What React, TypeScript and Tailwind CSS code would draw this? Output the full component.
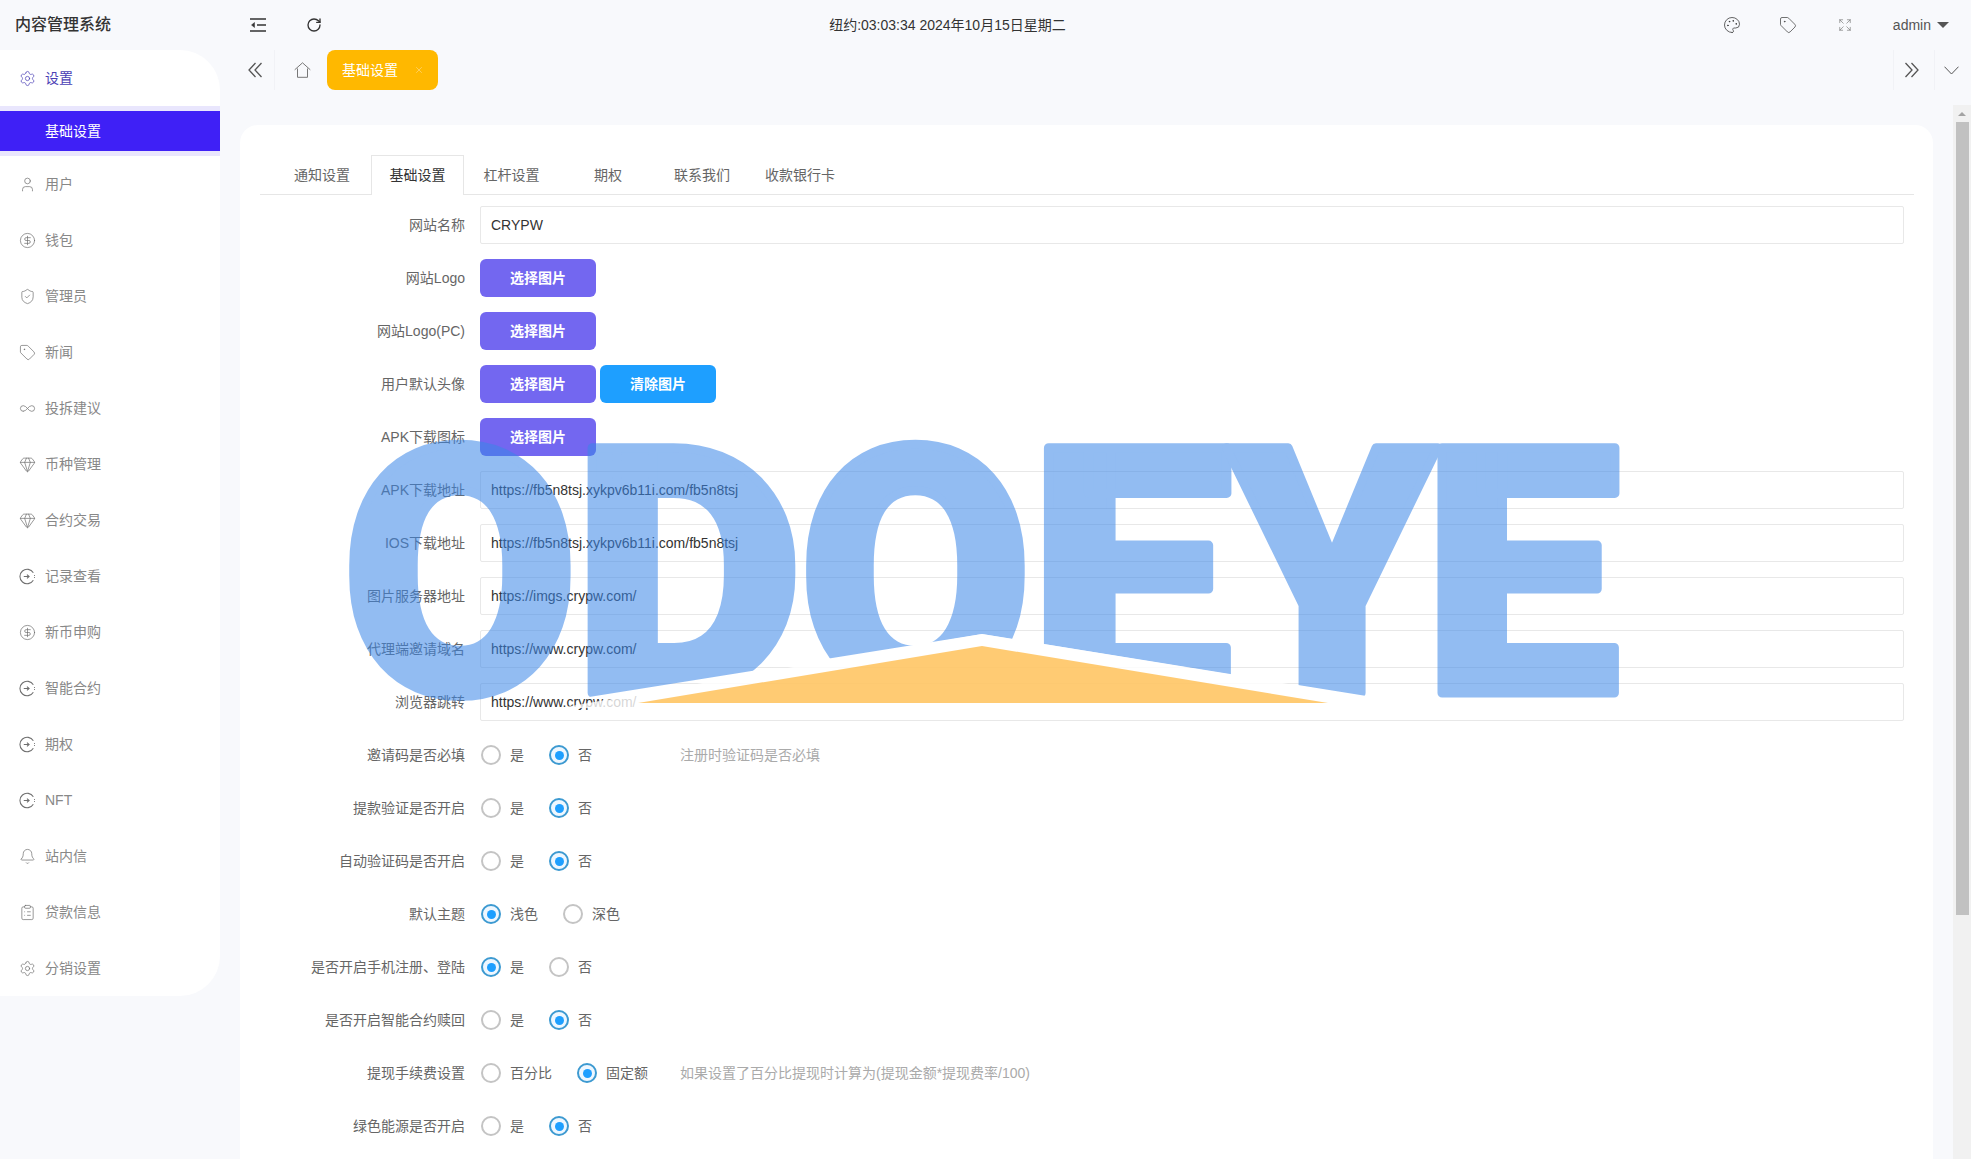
import React from "react";
import {
  Settings,
  User,
  CircleDollarSign,
  ShieldCheck,
  Tag,
  Infinity as InfinityIcon,
  Gem,
  Bell,
  ClipboardList,
  RotateCw,
  Palette,
  Expand,
  X,
} from "lucide-react";

const CircleIn = ({ size = 17 }: { size?: number }) => (
  <svg width={size} height={size} viewBox="0 0 16 16" fill="none" stroke="currentColor" strokeWidth="1">
    <path d="M13.5 4.5A6.8 6.8 0 1 0 13.5 11.5" />
    <path d="M4.5 8h5M7.5 6.3 9.5 8l-2 1.7" />
    <path d="M14.2 7h.8M14.2 9h.8" />
  </svg>
);

const Outdent = () => (
  <svg width="16" height="14" viewBox="0 0 16 14" fill="none" stroke="#333333" strokeWidth="1.5">
    <path d="M0 1h16M7 7h9M0 13h16" />
    <path d="M4.5 4.5 1.5 7l3 2.5z" fill="#333333" strokeWidth="0.5" />
  </svg>
);

const DoubleChevron = ({ dir }: { dir: "left" | "right" }) => (
  <svg width="14" height="16" viewBox="0 0 14 16" fill="none" stroke="#555555" strokeWidth="1.3">
    {dir === "left" ? <path d="M7.5 1 1 8l6.5 7M13.5 1 7 8l6.5 7" /> : <path d="M.5 1 7 8l-6.5 7M6.5 1 13 8l-6.5 7" />}
  </svg>
);

const HomeIcon = () => (
  <svg width="17" height="16" viewBox="0 0 17 16" fill="none" stroke="#777777" strokeWidth="1">
    <path d="M.7 7.8 8.5.8l7.8 7M3.5 6.5v8.8h10V6.5" />
  </svg>
);

const DownIcon = () => (
  <svg width="15" height="9" viewBox="0 0 15 9" fill="none" stroke="#555555" strokeWidth="1">
    <path d="M.5.7 7.5 8l7-7.3" />
  </svg>
);

const menu = [
  { name: "用户", icon: <User size={17} strokeWidth={1} /> },
  { name: "钱包", icon: <CircleDollarSign size={17} strokeWidth={1} /> },
  { name: "管理员", icon: <ShieldCheck size={17} strokeWidth={1} /> },
  { name: "新闻", icon: <Tag size={17} strokeWidth={1} /> },
  { name: "投拆建议", icon: <InfinityIcon size={17} strokeWidth={1} /> },
  { name: "币种管理", icon: <Gem size={17} strokeWidth={1} /> },
  { name: "合约交易", icon: <Gem size={17} strokeWidth={1} /> },
  { name: "记录查看", icon: <CircleIn /> },
  { name: "新币申购", icon: <CircleDollarSign size={17} strokeWidth={1} /> },
  { name: "智能合约", icon: <CircleIn /> },
  { name: "期权", icon: <CircleIn /> },
  { name: "NFT", icon: <CircleIn /> },
  { name: "站内信", icon: <Bell size={17} strokeWidth={1} /> },
  { name: "贷款信息", icon: <ClipboardList size={17} strokeWidth={1} /> },
  { name: "分销设置", icon: <Settings size={17} strokeWidth={1} /> },
];

const inputs1 = [{ label: "网站名称", value: "CRYPW" }];
const inputs2 = [
  { label: "APK下载地址", value: "https://fb5n8tsj.xykpv6b11i.com/fb5n8tsj" },
  { label: "IOS下载地址", value: "https://fb5n8tsj.xykpv6b11i.com/fb5n8tsj" },
  { label: "图片服务器地址", value: "https://imgs.crypw.com/" },
  { label: "代理端邀请域名", value: "https://www.crypw.com/" },
  { label: "浏览器跳转", value: "https://www.crypw.com/" },
];

const radios = [
  { label: "邀请码是否必填", options: ["是", "否"], checked: 1, hint: "注册时验证码是否必填" },
  { label: "提款验证是否开启", options: ["是", "否"], checked: 1 },
  { label: "自动验证码是否开启", options: ["是", "否"], checked: 1 },
  { label: "默认主题", options: ["浅色", "深色"], checked: 0 },
  { label: "是否开启手机注册、登陆", options: ["是", "否"], checked: 0 },
  { label: "是否开启智能合约赎回", options: ["是", "否"], checked: 1 },
  { label: "提现手续费设置", options: ["百分比", "固定额"], checked: 1, hint: "如果设置了百分比提现时计算为(提现金额*提现费率/100)" },
  { label: "绿色能源是否开启", options: ["是", "否"], checked: 1 },
];

function Row({ label, children }: { label: string; children: React.ReactNode }) {
  return (
    <div className="flex h-[38px] items-center mb-[15px]">
      <div className="w-[205px] mr-[15px] text-right text-sm text-[#666666] whitespace-nowrap">{label}</div>
      {children}
    </div>
  );
}

function Input({ value }: { value: string }) {
  return (
    <div className="w-[1424px] h-[38px] flex items-center pl-[10px] border border-[#e8e8e8] rounded-[2px] text-sm text-[#333333]">
      {value}
    </div>
  );
}

function PickButton({ blue }: { blue?: boolean }) {
  return (
    <button
      className={`w-[116px] h-[38px] rounded-[6px] text-sm font-bold text-white ${
        blue ? "bg-[#1e9fff]" : "bg-[#7367f0]"
      }`}
    >
      {blue ? "清除图片" : "选择图片"}
    </button>
  );
}

function Radio({ text, on }: { text: string; on: boolean }) {
  return (
    <div className="flex items-center mr-[25px]">
      {on ? (
        <span className="w-[20px] h-[20px] rounded-full border-2 border-[#3d9ad1] bg-[#eef7ff] flex items-center justify-center">
          <span className="w-[9px] h-[9px] rounded-full bg-[#1e9fff]" />
        </span>
      ) : (
        <span className="w-[20px] h-[20px] rounded-full border-2 border-[#c4c4c4]" />
      )}
      <span className="ml-[9px] text-sm text-[#666666]">{text}</span>
    </div>
  );
}

function Watermark() {
  const letters = [
    { c: "O", x: 342, w: 236 },
    { c: "D", x: 573, w: 230 },
    { c: "O", x: 799, w: 233 },
    { c: "E", x: 1029, w: 203 },
    { c: "Y", x: 1227, w: 210 },
    { c: "E", x: 1423, w: 197 },
  ];
  return (
    <svg
      className="absolute inset-0 pointer-events-none"
      width="1971"
      height="1159"
      viewBox="0 0 1971 1159"
    >
      <defs>
        <clipPath id="cut">
          <polygon points="0,0 1971,0 1971,750 1435,707 982,634 589,697 340,737 0,750" />
        </clipPath>
      </defs>
      <g clipPath="url(#cut)" opacity="0.55">
        {letters.map((l, i) => (
          <text
            key={i}
            x={l.x}
            y={693}
            fontSize={345}
            fontWeight={900}
            fontFamily="Roboto, sans-serif"
            textLength={l.w}
            lengthAdjust="spacingAndGlyphs"
            fill="#3a86e8"
            stroke="#3a86e8"
            strokeWidth={9}
            strokeLinejoin="round"
          >
            {l.c}
          </text>
        ))}
      </g>
      <polygon points="560,708 982,634 1435,708" fill="#ffffff" opacity="0.8" />
      <polygon points="638,703 982,646 1328,703" fill="#ffa000" opacity="0.55" />
    </svg>
  );
}

export default function App() {
  return (
    <div className="relative w-[1971px] h-[1159px] overflow-hidden bg-[#f8f9fc] flex flex-col font-['Liberation_Sans','Noto_Sans_CJK_SC',sans-serif]">
      {/* top bar */}
      <header className="h-[50px] flex items-center shrink-0">
        <div className="w-[220px] pl-[15px] text-base font-medium text-[#333333]">内容管理系统</div>
        <div className="w-[30px]" />
        <Outdent />
        <RotateCw size={16} strokeWidth={2} className="ml-[40px] text-[#333333]" />
        <div className="flex-1 text-center text-sm text-[#333333] pr-[150px]">纽约:03:03:34 2024年10月15日星期二</div>
        <Palette size={18} strokeWidth={1} className="text-[#333333]" />
        <Tag size={18} strokeWidth={1} className="ml-[38px] text-[#444444]" />
        <Expand size={14} strokeWidth={1} className="ml-[41px] text-[#666666]" />
        <span className="ml-[41px] text-sm text-[#555555]">admin</span>
        <span className="ml-[6px] mr-[22px] w-0 h-0 border-x-[6px] border-x-transparent border-t-[6px] border-t-[#555555]" />
      </header>

      <div className="flex flex-1 min-h-0">
        {/* sidebar */}
        <aside className="w-[220px] h-[946px] shrink-0 bg-white rounded-r-[40px]">
          <div className="h-[56px] flex items-center pl-[19px] text-[#4a3fb5]">
            <Settings size={17} strokeWidth={1} />
            <span className="ml-[9px] text-sm">设置</span>
          </div>
          <div className="h-[50px] bg-[#e9e6fd] py-[5px]">
            <div className="h-[40px] bg-[#3f20f6] flex items-center pl-[45px] text-sm text-white">基础设置</div>
          </div>
          {menu.map((m) => (
            <div key={m.name} className="h-[56px] flex items-center pl-[19px] text-[#888888]">
              <span className="text-[#6f6f6f]">{m.icon}</span>
              <span className="ml-[9px] text-sm">{m.name}</span>
            </div>
          ))}
        </aside>

        <main className="flex-1 min-w-0 flex flex-col">
          {/* tag bar */}
          <div className="h-[55px] shrink-0 flex">
            <div className="h-[40px] w-[55px] pl-[28px] flex items-center border-r border-[#f1f2f6]">
              <DoubleChevron dir="left" />
            </div>
            <div className="h-[40px] w-[52px] pl-[19px] flex items-center">
              <HomeIcon />
            </div>
            <div className="h-[40px] w-[111px] rounded-[8px] bg-[#ffb800] flex items-center pl-[15px] text-sm text-white">
              基础设置
              <X size={10} className="ml-[16px] text-[#ffd36b]" />
            </div>
            <div className="flex-1" />
            <div className="h-[40px] w-[42px] pr-[4px] flex items-center justify-center border-x border-[#f1f2f6]">
              <DoubleChevron dir="right" />
            </div>
            <div className="h-[40px] w-[36px] flex items-center pl-[9px]">
              <DownIcon />
            </div>
          </div>

          <div className="flex-1 min-h-0 flex">
            <div className="flex-1 min-w-0 pl-[20px] pt-[20px]">
              {/* card */}
              <div className="w-[1693px] h-[1100px] bg-white rounded-t-[18px] pt-[30px] px-[20px]">
                <div className="flex h-[40px] w-[1654px] border-b border-[#e6e6e6] text-sm text-[#666666] mb-[11px]">
                  <div className="w-[111px] pl-[34px] leading-[40px]">通知设置</div>
                  <div className="w-[93px] h-[40px] border border-b-0 border-[#e6e6e6] bg-white text-center leading-[38px] text-[#333333]">基础设置</div>
                  <div className="w-[95px] text-center leading-[40px]">杠杆设置</div>
                  <div className="w-[98px] text-center leading-[40px]">期权</div>
                  <div className="w-[90px] text-center leading-[40px]">联系我们</div>
                  <div className="w-[106px] text-center leading-[40px]">收款银行卡</div>
                </div>

                {inputs1.map((f) => (
                  <Row key={f.label} label={f.label}>
                    <Input value={f.value} />
                  </Row>
                ))}
                <Row label="网站Logo"><PickButton /></Row>
                <Row label="网站Logo(PC)"><PickButton /></Row>
                <Row label="用户默认头像">
                  <div className="flex gap-[4px]">
                    <PickButton />
                    <PickButton blue />
                  </div>
                </Row>
                <Row label="APK下载图标"><PickButton /></Row>
                {inputs2.map((f) => (
                  <Row key={f.label} label={f.label}>
                    <Input value={f.value} />
                  </Row>
                ))}
                {radios.map((r) => (
                  <Row key={r.label} label={r.label}>
                    <div className={`flex pl-[1px] ${r.hint ? "w-[200px]" : ""}`}>
                      {r.options.map((o, i) => (
                        <Radio key={o} text={o} on={i === r.checked} />
                      ))}
                    </div>
                    {r.hint && <span className="text-sm text-[#aaaaaa]">{r.hint}</span>}
                  </Row>
                ))}
              </div>
            </div>

            {/* page scrollbar */}
            <div className="w-[18px] shrink-0 bg-[#f1f1f1] flex flex-col items-center">
              <div className="h-[17px] flex items-center justify-center">
                <span className="w-0 h-0 border-x-[4px] border-x-transparent border-b-[4px] border-b-[#a3a3a3]" />
              </div>
              <div className="w-[13px] h-[793px] bg-[#c1c1c1]" />
            </div>
          </div>
        </main>
      </div>

      <Watermark />
    </div>
  );
}
